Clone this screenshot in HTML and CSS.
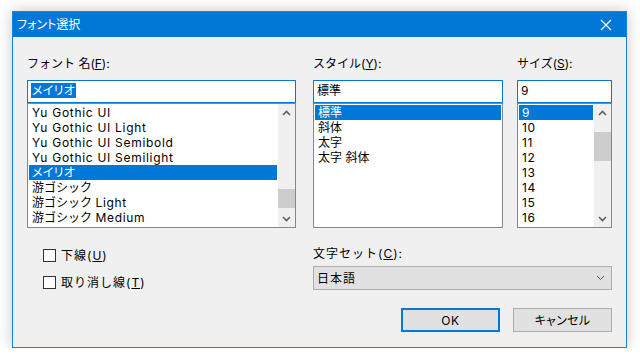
FILE: index.html
```html
<!DOCTYPE html>
<html lang="ja">
<head>
<meta charset="utf-8">
<title>フォント選択</title>
<link rel="stylesheet" href="styles.css">
</head>
<body>
<div class="window">
  <div class="titlebar">
    <span class="title">フォント選択</span>
    <svg class="close" width="12" height="12" viewBox="0 0 12 12"><path d="M1 1 L11 11 M11 1 L1 11" stroke="#fff" stroke-width="1.2" fill="none"/></svg>
  </div>
  <div class="content">
    <div class="top">
      <div class="col col-font">
        <div class="label">フォント 名(<u>F</u>):</div>
        <div class="edit"><span class="sel kana">メイリオ</span></div>
        <div class="list">
          <div class="items">
            <div class="item lat">Yu Gothic UI</div>
            <div class="item lat">Yu Gothic UI Light</div>
            <div class="item lat">Yu Gothic UI Semibold</div>
            <div class="item lat">Yu Gothic UI Semilight</div>
            <div class="item selected kana">メイリオ</div>
            <div class="item">游ゴシック</div>
            <div class="item">游ゴシック <span class="lat">Light</span></div>
            <div class="item">游ゴシック <span class="lat">Medium</span></div>
          </div>
          <div class="scrollbar">
            <div class="arrow"><svg width="9" height="6" viewBox="0 0 9 6"><path d="M1 5 L4.5 1.5 L8 5" stroke="#606060" stroke-width="1.6" fill="none"/></svg></div>
            <div class="track font-track"><div class="thumb font-thumb"></div></div>
            <div class="arrow"><svg width="9" height="6" viewBox="0 0 9 6"><path d="M1 1 L4.5 4.5 L8 1" stroke="#606060" stroke-width="1.6" fill="none"/></svg></div>
          </div>
        </div>
      </div>
      <div class="col col-style">
        <div class="label">スタイル(<u>Y</u>):</div>
        <div class="edit">標準</div>
        <div class="list">
          <div class="items">
            <div class="item selected">標準</div>
            <div class="item">斜体</div>
            <div class="item">太字</div>
            <div class="item">太字 斜体</div>
          </div>
        </div>
      </div>
      <div class="col col-size">
        <div class="label">サイズ(<u>S</u>):</div>
        <div class="edit lat">9</div>
        <div class="list">
          <div class="items">
            <div class="item selected lat">9</div>
            <div class="item lat">10</div>
            <div class="item lat">11</div>
            <div class="item lat">12</div>
            <div class="item lat">13</div>
            <div class="item lat">14</div>
            <div class="item lat">15</div>
            <div class="item lat">16</div>
          </div>
          <div class="scrollbar">
            <div class="arrow"><svg width="9" height="6" viewBox="0 0 9 6"><path d="M1 5 L4.5 1.5 L8 5" stroke="#606060" stroke-width="1.6" fill="none"/></svg></div>
            <div class="track size-track"><div class="thumb size-thumb"></div></div>
            <div class="arrow"><svg width="9" height="6" viewBox="0 0 9 6"><path d="M1 1 L4.5 4.5 L8 1" stroke="#606060" stroke-width="1.6" fill="none"/></svg></div>
          </div>
        </div>
      </div>
    </div>
    <div class="mid">
      <div class="checks">
        <div class="check"><span class="box"></span><span class="wide">下線(<u>U</u>)</span></div>
        <div class="check"><span class="box"></span><span class="wide">取り消し線(<u>T</u>)</span></div>
      </div>
      <div class="charset">
        <div class="label wide">文字セット(<u>C</u>):</div>
        <div class="combo"><span class="wide">日本語</span><svg width="9" height="6" viewBox="0 0 9 6"><path d="M1 1 L4.5 4.5 L8 1" stroke="#555" stroke-width="1" fill="none"/></svg></div>
      </div>
    </div>
    <div class="buttons">
      <div class="btn default lat">OK</div>
      <div class="btn kana">キャンセル</div>
    </div>
  </div>
</div>
</body>
</html>
```
FILE: styles.css
```css
html, body {
  margin: 0;
  padding: 0;
  background: #ffffff;
}
body {
  padding: 11px 0 0 12px;
  font-family: "Inter", "Noto Sans CJK JP", sans-serif;
  font-size: 12px;
  color: #000;
}
u { text-decoration: underline; text-underline-offset: 1px; }
.lat { letter-spacing: 0.7px; }
.kana { font-feature-settings: "palt"; letter-spacing: 0.3px; }
.wide { letter-spacing: 1px; }
.window {
  width: 615px;
  height: 337px;
  box-sizing: border-box;
  border: 1px solid #1883d7;
  background: #f0f0f0;
  box-shadow: 0 0 14px rgba(0,0,0,0.22);
  display: flex;
  flex-direction: column;
}
.titlebar {
  height: 25px;
  background: #0078d7;
  color: #fff;
  display: flex;
  align-items: center;
  justify-content: space-between;
  padding: 0 14px 0 4px;
  flex: none;
}
.title {
  line-height: 15px;
  font-feature-settings: "palt";
}
.close { display: block; }
.content {
  padding: 19px 14px 0 14px;
  display: flex;
  flex-direction: column;
}
.top {
  display: flex;
}
.col { flex: none; }
.col-font { width: 269px; }
.col-style { width: 190px; margin-left: 17px; }
.col-size { width: 95px; margin-left: 14px; }
.label {
  line-height: 15px;
  height: 15px;
  white-space: nowrap;
}
.edit {
  margin-top: 9px;
  height: 23px;
  box-sizing: border-box;
  border: 1px solid #0078d7;
  background: #fff;
  padding: 2px 3px 0 3px;
  line-height: 15px;
  white-space: nowrap;
}
.sel {
  background: #0078d7;
  color: #fff;
  display: inline-block;
  padding: 0 1px;
}
.list {
  height: 125px;
  box-sizing: border-box;
  border: 1px solid #828790;
  background: #fff;
  display: flex;
}
.items {
  flex: 1;
  padding: 1px 1px 0 1px;
  overflow: hidden;
}
.item {
  height: 15px;
  line-height: 15px;
  padding-left: 3px;
  white-space: nowrap;
}
.item.selected {
  background: #0078d7;
  color: #fff;
}
.scrollbar {
  width: 17px;
  background: #f0f0f0;
  display: flex;
  flex-direction: column;
  flex: none;
}
.arrow {
  height: 17px;
  display: flex;
  align-items: center;
  justify-content: center;
  flex: none;
}
.track { flex: 1; display: flex; flex-direction: column; }
.thumb { background: #cdcdcd; }
.font-track { justify-content: flex-end; padding-bottom: 2px; }
.font-thumb { height: 19px; }
.size-track { padding-top: 11px; }
.size-thumb { height: 29px; }
.mid {
  display: flex;
}
.checks {
  width: 286px;
  padding-left: 16px;
  box-sizing: border-box;
  padding-top: 20px;
  display: flex;
  flex-direction: column;
  gap: 12px;
}
.check {
  display: flex;
  align-items: center;
  height: 15px;
  line-height: 15px;
  white-space: nowrap;
}
.box {
  width: 13px;
  height: 13px;
  box-sizing: border-box;
  border: 1px solid #333;
  background: #fff;
  margin-right: 5px;
  flex: none;
}
.charset {
  padding-top: 18px;
  width: 299px;
}
.combo {
  margin-top: 5px;
  height: 24px;
  box-sizing: border-box;
  border: 1px solid #adadad;
  background: #e1e1e1;
  display: flex;
  align-items: center;
  justify-content: space-between;
  padding: 0 6px 0 3px;
  line-height: 15px;
}
.buttons {
  margin-top: 18px;
  display: flex;
  justify-content: flex-end;
  gap: 13px;
}
.btn {
  width: 99px;
  height: 24px;
  box-sizing: border-box;
  border: 1px solid #adadad;
  background: #e1e1e1;
  display: flex;
  align-items: center;
  justify-content: center;
  line-height: 15px;
}
.btn.default {
  border: 2px solid #0078d7;
}
```
